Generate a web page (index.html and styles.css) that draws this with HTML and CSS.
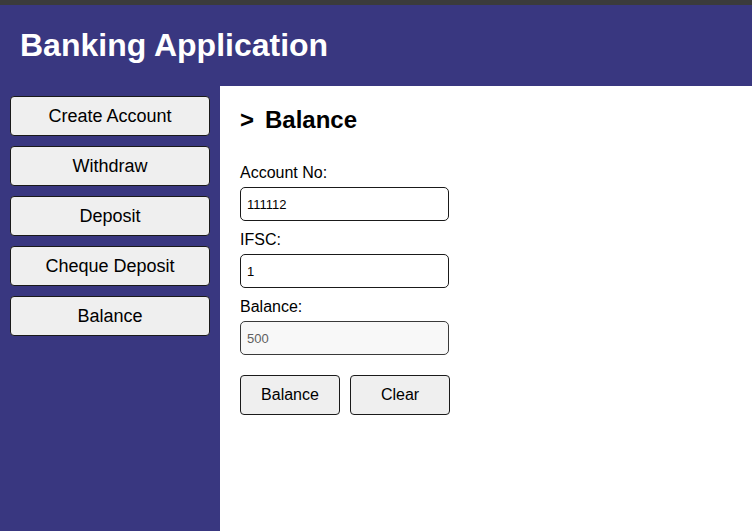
FILE: index.html
```html
<!DOCTYPE html>
<html>
<head>
<meta charset="utf-8">
<link rel="stylesheet" href="styles.css">
</head>
<body>
<div class="topstrip"></div>
<header class="header"><h1 class="title">Banking Application</h1></header>
<div class="layout">
  <nav class="sidebar">
    <button class="navbtn">Create Account</button>
    <button class="navbtn">Withdraw</button>
    <button class="navbtn">Deposit</button>
    <button class="navbtn">Cheque Deposit</button>
    <button class="navbtn">Balance</button>
  </nav>
  <main class="main">
    <h2 class="heading"><span class="arrow">&gt;</span>Balance</h2>
    <div class="field">
      <label class="label">Account No:</label>
      <input class="input" type="text" value="111112">
    </div>
    <div class="field">
      <label class="label">IFSC:</label>
      <input class="input" type="text" value="1">
    </div>
    <div class="field">
      <label class="label">Balance:</label>
      <input class="input" type="text" value="500" disabled>
    </div>
    <div class="actions">
      <button class="actbtn">Balance</button>
      <button class="actbtn">Clear</button>
    </div>
  </main>
</div>
</body>
</html>
```

FILE: styles.css
```css
* { box-sizing: border-box; }
html, body { margin: 0; padding: 0; height: 100%; }
body {
  font-family: "Liberation Sans", Arial, sans-serif;
  display: flex;
  flex-direction: column;
  background: #ffffff;
}
.topstrip { height: 5px; background: #3b3b3b; flex: none; }
.header {
  height: 81px;
  background: #393780;
  display: flex;
  align-items: center;
  padding-left: 20px;
  flex: none;
}
.title {
  margin: 0;
  color: #ffffff;
  font-size: 32px;
  font-weight: bold;
}
.layout { flex: 1; display: flex; }
.sidebar {
  width: 220px;
  background: #393780;
  padding: 10px;
  display: flex;
  flex-direction: column;
  gap: 10px;
}
.navbtn {
  width: 200px;
  height: 40px;
  background: #efefef;
  border: 1px solid #1a1a1a;
  border-radius: 4px;
  font-family: "Liberation Sans", Arial, sans-serif;
  font-size: 18px;
  color: #000;
  padding: 0;
}
.main {
  flex: 1;
  padding: 20px 20px;
}
.heading {
  margin: 0 0 31px 0;
  font-size: 24px;
  font-weight: bold;
  line-height: 27px;
}
.arrow { margin-right: 11px; }
.field { display: flex; flex-direction: column; align-items: flex-start; }
.label {
  font-size: 16px;
  line-height: 18px;
  margin-bottom: 5px;
  color: #000;
}
.input {
  width: 209px;
  height: 34px;
  border: 1px solid #1a1a1a;
  border-radius: 5px;
  padding: 0 6px;
  font-family: "Liberation Sans", Arial, sans-serif;
  font-size: 13px;
  color: #000;
  background: #fff;
  margin-bottom: 10px;
}
.input:disabled {
  background: #f8f8f8;
  color: #5f5f5f;
  border-color: #3a3a3a;
}
.actions {
  display: flex;
  gap: 10px;
  margin-top: 10px;
}
.actbtn {
  width: 100px;
  height: 40px;
  background: #efefef;
  border: 1px solid #1a1a1a;
  border-radius: 4px;
  font-family: "Liberation Sans", Arial, sans-serif;
  font-size: 16px;
  color: #000;
  padding: 0;
}
```
